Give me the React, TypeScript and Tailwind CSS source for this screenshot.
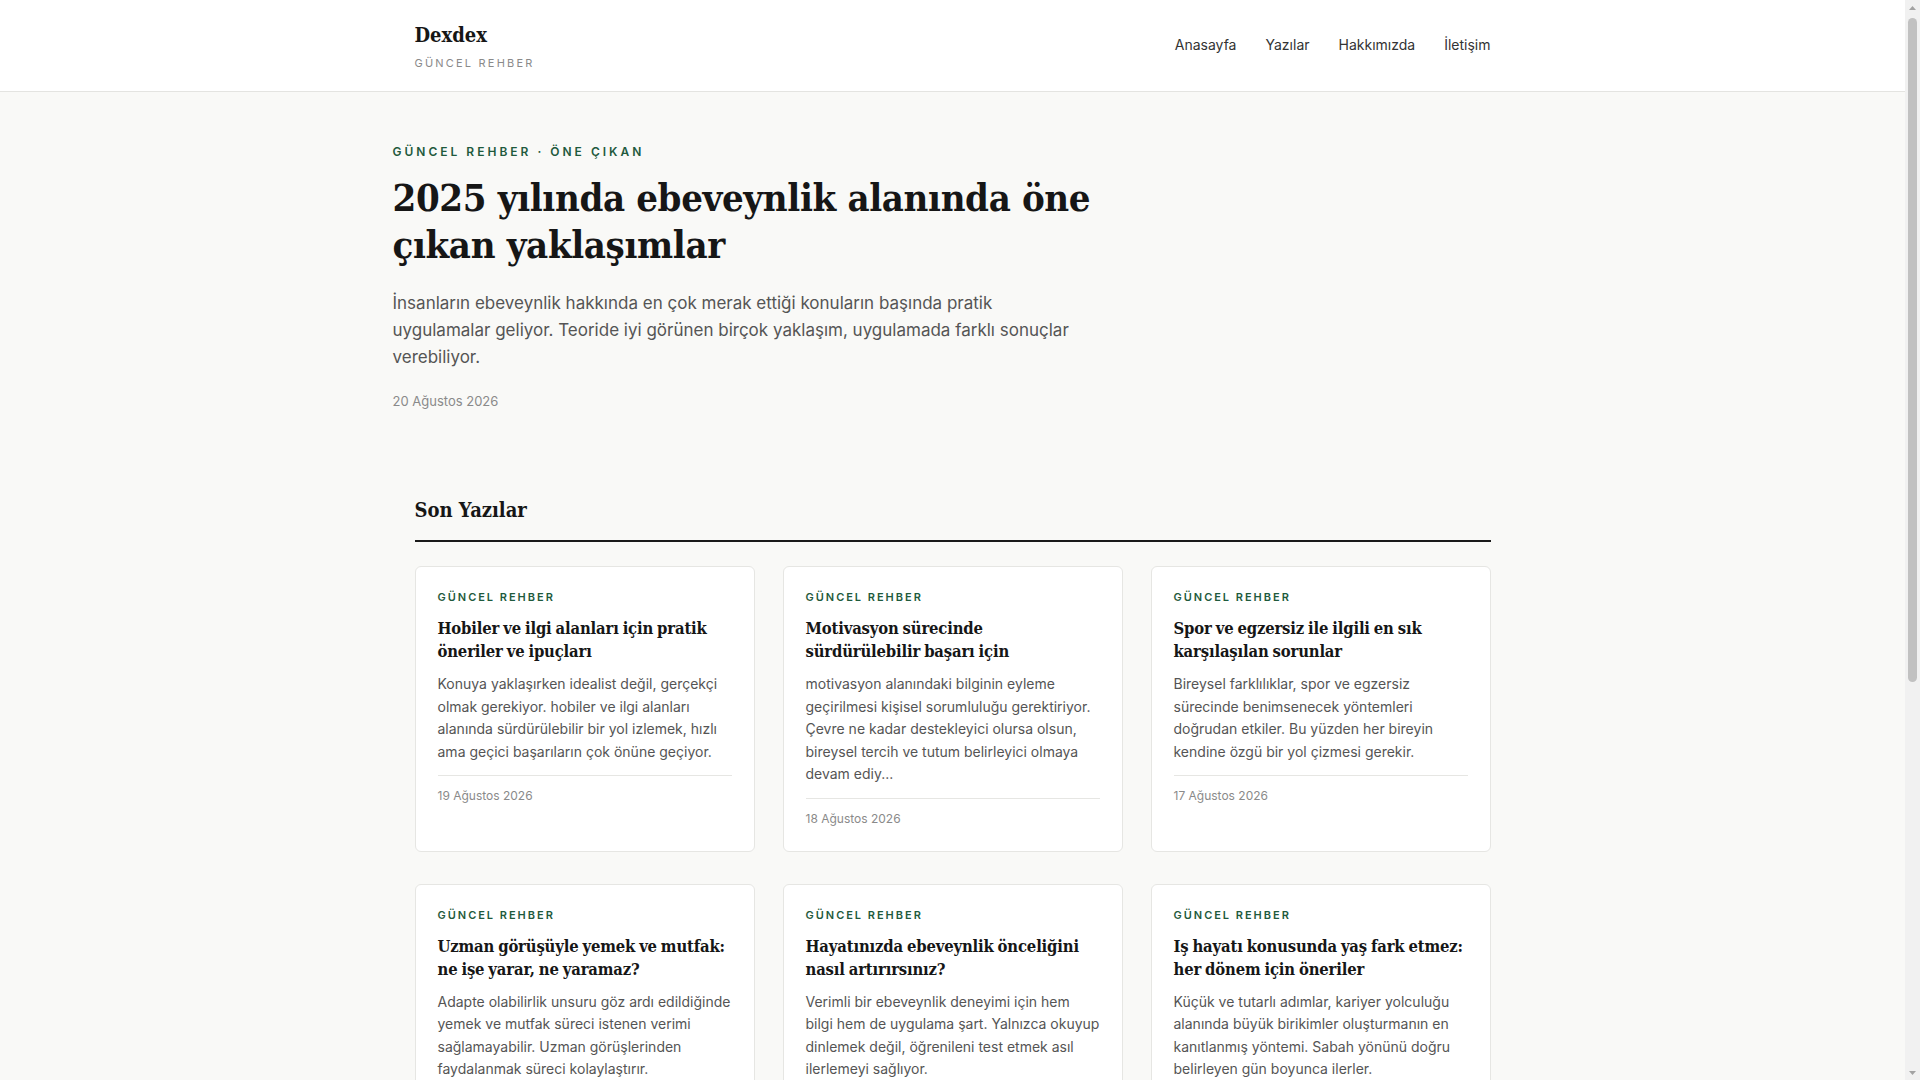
import React from "react";

type Post = {
  title: string;
  excerpt: string;
  date: string;
};

const posts: Post[] = [
  {
    title: "Hobiler ve ilgi alanları için pratik öneriler ve ipuçları",
    excerpt:
      "Konuya yaklaşırken idealist değil, gerçekçi olmak gerekiyor. hobiler ve ilgi alanları alanında sürdürülebilir bir yol izlemek, hızlı ama geçici başarıların çok önüne geçiyor.",
    date: "19 Ağustos 2026",
  },
  {
    title: "Motivasyon sürecinde sürdürülebilir başarı için",
    excerpt:
      "motivasyon alanındaki bilginin eyleme geçirilmesi kişisel sorumluluğu gerektiriyor. Çevre ne kadar destekleyici olursa olsun, bireysel tercih ve tutum belirleyici olmaya devam ediy...",
    date: "18 Ağustos 2026",
  },
  {
    title: "Spor ve egzersiz ile ilgili en sık karşılaşılan sorunlar",
    excerpt:
      "Bireysel farklılıklar, spor ve egzersiz sürecinde benimsenecek yöntemleri doğrudan etkiler. Bu yüzden her bireyin kendine özgü bir yol çizmesi gerekir.",
    date: "17 Ağustos 2026",
  },
  {
    title: "Uzman görüşüyle yemek ve mutfak: ne işe yarar, ne yaramaz?",
    excerpt:
      "Adapte olabilirlik unsuru göz ardı edildiğinde yemek ve mutfak süreci istenen verimi sağlamayabilir. Uzman görüşlerinden faydalanmak süreci kolaylaştırır.",
    date: "16 Ağustos 2026",
  },
  {
    title: "Hayatınızda ebeveynlik önceliğini nasıl artırırsınız?",
    excerpt:
      "Verimli bir ebeveynlik deneyimi için hem bilgi hem de uygulama şart. Yalnızca okuyup dinlemek değil, öğrenileni test etmek asıl ilerlemeyi sağlıyor.",
    date: "15 Ağustos 2026",
  },
  {
    title: "Iş hayatı konusunda yaş fark etmez: her dönem için öneriler",
    excerpt:
      "Küçük ve tutarlı adımlar, kariyer yolculuğu alanında büyük birikimler oluşturmanın en kanıtlanmış yöntemi. Sabah yönünü doğru belirleyen gün boyunca ilerler.",
    date: "14 Ağustos 2026",
  },
];

const serif = "font-['DejaVu_Serif_Condensed','Liberation_Serif',serif]";
const sans = "font-['Inter','Liberation_Sans',sans-serif]";

function PostCard({ post }: { post: Post }) {
  return (
    <article className="flex flex-col rounded-md border border-[#e6e6e3] bg-white px-[22px] pb-[24px] pt-[22px]">
      <p className="text-[11px] font-semibold uppercase leading-4 tracking-[0.18em] text-[#1f5a3d]">
        Güncel Rehber
      </p>
      <h3
        className={`${serif} mt-3 text-[16.5px] font-bold leading-[23px] tracking-[-0.01em] [word-spacing:-1px] text-[#161616]`}
      >
        {post.title}
      </h3>
      <p className="mt-2.5 text-[14px] leading-[22.5px] text-[#555]">
        {post.excerpt}
      </p>
      <div className="mt-3 border-t border-[#e6e6e3] pt-3">
        <p className="text-[12px] leading-4 text-[#8a8a8a]">{post.date}</p>
      </div>
    </article>
  );
}

function FakeScrollbar() {
  return (
    <aside className="flex w-[15px] shrink-0 flex-col items-center bg-[#f1f1f1]">
      <div className="flex h-[15px] w-full items-center justify-center">
        <svg width="7" height="4" viewBox="0 0 7 4">
          <path d="M3.5 0 L7 4 L0 4 Z" fill="#a3a3a3" />
        </svg>
      </div>
      <div className="mt-[3px] h-[664px] w-[9px] rounded-full bg-[#c1c1c1]" />
      <div className="flex-1" />
      <div className="flex h-[15px] w-full items-center justify-center">
        <svg width="7" height="4" viewBox="0 0 7 4">
          <path d="M0 0 L7 0 L3.5 4 Z" fill="#a3a3a3" />
        </svg>
      </div>
    </aside>
  );
}

export default function App() {
  return (
    <div className={`${sans} flex h-screen overflow-hidden bg-[#f9f9f7] text-[#161616]`}>
      <div className="min-w-0 flex-1 overflow-hidden">
        <header className="border-b border-[#e4e4e1] bg-white">
          <div className="mx-auto flex h-[91px] max-w-[1140px] items-center justify-between px-8">
            <div className="flex flex-col">
              <span
                className={`${serif} text-[20px] font-bold leading-7 text-[#161616]`}
              >
                Dexdex
              </span>
              <span className="mt-[6px] text-[11px] leading-4 tracking-[0.2em] text-[#8a8a8a]">
                GÜNCEL REHBER
              </span>
            </div>
            <nav className="flex items-center gap-[29px] pb-[2px] text-[14px] text-[#333]">
              <a href="#">Anasayfa</a>
              <a href="#">Yazılar</a>
              <a href="#">Hakkımızda</a>
              <a href="#">İletişim</a>
            </nav>
          </div>
        </header>

        <main>
          <section className="mx-auto max-w-[1120px] pt-[52px]">
            <p className="text-[12px] font-semibold leading-4 tracking-[0.25em] text-[#1f5a3d]">
              GÜNCEL REHBER · ÖNE ÇIKAN
            </p>
            <h1
              className={`${serif} mt-[14px] max-w-3xl text-[38px] font-bold leading-[47px] tracking-[-0.01em] text-[#161616]`}
            >
              2025 yılında ebeveynlik alanında öne çıkan yaklaşımlar
            </h1>
            <p className="mt-[22px] max-w-[690px] text-[17px] leading-[27px] text-[#555]">
              İnsanların ebeveynlik hakkında en çok merak ettiği konuların
              başında pratik uygulamalar geliyor. Teoride iyi görünen birçok
              yaklaşım, uygulamada farklı sonuçlar verebiliyor.
            </p>
            <p className="mt-5 text-[13px] leading-5 text-[#8a8a8a]">
              20 Ağustos 2026
            </p>
          </section>

          <section className="mx-auto max-w-[1140px] px-8 pb-16 pt-[85px]">
            <h2
              className={`${serif} border-b-2 border-[#1a1a1a] pb-4 text-[20px] font-bold leading-7 text-[#161616]`}
            >
              Son Yazılar
            </h2>
            <div className="mt-6 grid grid-cols-3 gap-x-7 gap-y-8">
              {posts.map((post) => (
                <PostCard key={post.title} post={post} />
              ))}
            </div>
          </section>
        </main>
      </div>
      <FakeScrollbar />
    </div>
  );
}
